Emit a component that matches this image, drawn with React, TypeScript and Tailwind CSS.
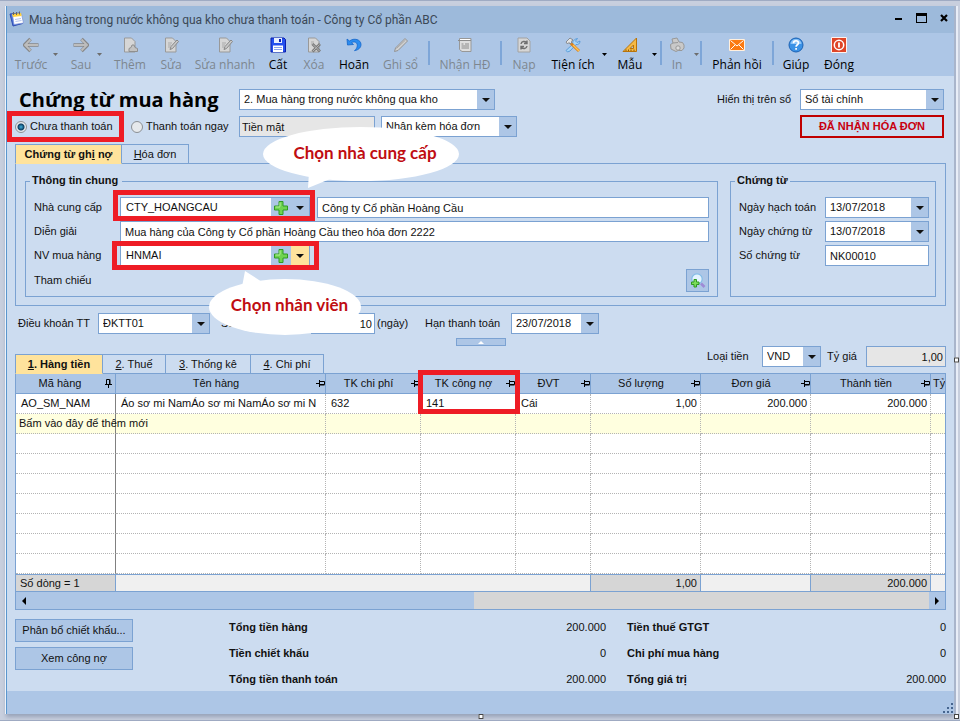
import React from 'react';
import clsx from 'clsx';

const Caret = ({ className }: { className?: string }) => (
  <svg viewBox="0 0 8 4" className={clsx('w-2 h-1 shrink-0', className)} fill="currentColor" aria-hidden="true">
    <path d="M0 0h8L4 4z" />
  </svg>
);

const PlusIcon = () => (
  <svg viewBox="0 0 16 16" className="w-4 h-4" aria-hidden="true">
    <path d="M6 1.500h4v4.500h4.500v4H10v4.500H6V10H1.500V6H6z" fill="#6fd350" stroke="#2f9a22" />
    <path d="M7 6.500V2.500M2.500 7H7" stroke="#b6f09c" fill="none" />
  </svg>
);

const PinIcon = ({ upright }: { upright?: boolean }) => (
  <svg viewBox="0 0 9 9" className={clsx('w-[9px] h-[9px] shrink-0', upright && '-rotate-90')} aria-hidden="true">
    <path d="M0 4.500h3M3.500 1v7M3.500 2.500h5v3h-5M3.500 6h5" fill="none" stroke="#000" />
  </svg>
);

const Svg = ({ children }: { children: React.ReactNode }) => (
  <svg viewBox="0 0 16 16" className="w-4 h-4" fill="none" aria-hidden="true">
    {children}
  </svg>
);

const page = <path d="M2.500 1h7L13 4.500V15H2.500z" fill="#d6d6d6" stroke="#999" />;

const icons = {
  back: <Svg><path d="M7.500 2L1.500 8l6 6M1 8h14.500" stroke="#868686" strokeWidth="3.600" /><path d="M7.500 2.500L2 8l5.500 5.500M2.500 8h12.500" stroke="#bdbdbd" strokeWidth="1.800" /></Svg>,
  forward: <Svg><path d="M8.500 2l6 6-6 6M15 8H.5" stroke="#868686" strokeWidth="3.600" /><path d="M8.500 2.500L14 8l-5.500 5.500M13.500 8H1" stroke="#bdbdbd" strokeWidth="1.800" /></Svg>,
  add: <Svg>{page}<path d="M7 14.500v-3l2-1 1-2.500h2l1 2.500 2.500 1v3z" fill="#c2c2c2" stroke="#8f8f8f" /></Svg>,
  edit: <Svg>{page}<path d="M5 6h4M5 8h3M5 10h2" stroke="#aaa" /><path d="M7 12.500l1-3L14 3l1.500 1.500L9.500 11.500z" fill="#c9c9c9" stroke="#888" /></Svg>,
  save: <Svg><path d="M1 1h13l1.500 1.500V15H1z" fill="#2450ee" stroke="#0a1fae" /><path d="M4 1h8v5H4z" fill="#e6eeff" /><path d="M9 2h2v3H9z" fill="#0a1fae" /><path d="M3 8.500h10V15H3z" fill="#fff" /><path d="M4 10.500h8M4 12.500h8" stroke="#8ba4ee" /></Svg>,
  remove: <Svg>{page}<path d="M5 5h3M5 7h3" stroke="#aaa" /><path d="M6.500 7l7.500 7.500M14 7l-7.500 7.500" stroke="#7d7d7d" strokeWidth="2.800" /><path d="M7 7.500l6.500 6.500M13.500 7.500L7 14" stroke="#b5b5b5" /></Svg>,
  undo: <Svg><path d="M1 2l.5 6 6-.5-2-1.800c3-2 6 0 5.800 3-.1 2-1.200 3.500-2.800 5 4-.8 6.500-3 6.500-6.200C15 2.500 8 .5 3.500 4z" fill="#2b8cf0" stroke="#1465c8" strokeWidth=".8" /></Svg>,
  pen: <Svg><path d="M1.500 14.500l1-3.500L12 1.500l2.500 2.500L5 13.500z" fill="#d2d2d2" stroke="#929292" /><path d="M3.500 11.500L12.500 3" stroke="#a5a5a5" /></Svg>,
  invoice: <Svg><path d="M2.500 1.500h11.500v13H5l-2.500-2z" fill="#dedede" stroke="#989898" /><path d="M1 3.500h13M4.500 7h2M8 7h4M4.500 9h7.500M4.500 11h7.500" stroke="#8c8c8c" /><path d="M3 2.500h10" stroke="#fff" /></Svg>,
  reload: <Svg><path d="M2 1h9l3 3v11H2z" fill="#d6d6d6" stroke="#a2a2a2" /><path d="M5 7c.5-3 4-3 5.500-1.500M11 3.500v3H8M11 9c-.5 3-4 3-5.500 1.500M5 12.500v-3h3" stroke="#6f6f6f" strokeWidth="1.400" /></Svg>,
  tools: <Svg><path d="M12.500 1.500l-2 2.500 1.500 1.500 3-1.500c0 3-2 4-4 3.500L5 14l-2.500 1L1 13.500 8 7c-1-2 1-5 4.500-5.500z" fill="#a5d4f8" stroke="#4a92d4" strokeWidth=".8" /><path d="M6 6.500l8 7.500" stroke="#d8801c" strokeWidth="3" /><path d="M8 8l6 6" stroke="#ffc452" strokeWidth="1.400" /><path d="M1 5l4-4 3 2-1.500 1L7 5 5 7 4 5.500 2.500 7z" fill="#e3e3e3" stroke="#777" strokeWidth=".8" /></Svg>,
  ruler: <Svg><path d="M1 14.500L14.500 1v13.500z" fill="#f5b945" stroke="#b97309" /><path d="M8 11.500h3.500V8z" fill="#adc6e6" stroke="#b97309" /><path d="M4 14v-1.500M6.500 14v-1.500M9 14v-1.500M12 14v-1.500" stroke="#8d5906" /></Svg>,
  print: <Svg><path d="M1.500 7.500L4 6 3 2l5-1 2 4 3.500.5L15 8v3l-2 2.500H9l-2 1-5-2.500z" fill="#c9c9c9" stroke="#989898" /><path d="M4 6l5-.5" stroke="#989898" /><circle cx="9" cy="11" r="2.200" fill="#dcdcdc" stroke="#989898" /></Svg>,
  mail: <Svg><path d="M.5 2.500h15v11H.5z" fill="#fb7a12" stroke="#fff0df" /><path d="M1.500 3.500L8 9l6.500-5.500M1.500 12.500L6 8M14.500 12.500L10 8" stroke="#fff" /></Svg>,
  help: <Svg><circle cx="8" cy="8" r="7" fill="#3b92e6" stroke="#1c62b4" /><path d="M2.500 7a5.500 5 0 0 1 11 0z" fill="#8cc4f8" /><path d="M5.500 6.200C5.600 3 10.500 3 10.500 6c0 1.800-2.400 1.800-2.400 3.700M8.100 11v1.800" stroke="#fff" strokeWidth="1.700" /></Svg>,
  close: <Svg><path d="M.5 .5h15v15H.5z" fill="#df4527" stroke="#fff2ee" /><circle cx="8" cy="8" r="4.700" stroke="#fff" strokeWidth="1.500" /><path d="M8 5.500v5" stroke="#fff" strokeWidth="1.800" /></Svg>,
};

type Tool = { icon?: keyof typeof icons; label?: string; w?: string; kind?: 'sep' | 'caret'; off?: boolean };

const tools: Tool[] = [
  { icon: 'back', label: 'Trước', w: 'w-10', off: true },
  { kind: 'caret', w: 'w-4', off: true },
  { icon: 'forward', label: 'Sau', w: 'w-7', off: true },
  { kind: 'caret', w: 'w-[10px]', off: true },
  { icon: 'add', label: 'Thêm', w: 'w-[50px]', off: true },
  { icon: 'edit', label: 'Sửa', w: 'w-8', off: true },
  { icon: 'edit', label: 'Sửa nhanh', w: 'w-[76px]', off: true },
  { icon: 'save', label: 'Cất', w: 'w-[30px]' },
  { icon: 'remove', label: 'Xóa', w: 'w-[42px]', off: true },
  { icon: 'undo', label: 'Hoãn', w: 'w-[38px]' },
  { icon: 'pen', label: 'Ghi sổ', w: 'w-[55px]', off: true },
  { kind: 'sep' },
  { icon: 'invoice', label: 'Nhận HĐ', w: 'w-[70px]', off: true },
  { kind: 'sep' },
  { icon: 'reload', label: 'Nạp', w: 'w-11', off: true },
  { icon: 'tools', label: 'Tiện ích', w: 'w-[54px]' },
  { kind: 'caret', w: 'w-[10px]' },
  { icon: 'ruler', label: 'Mẫu', w: 'w-10' },
  { kind: 'caret', w: 'w-[10px]' },
  { kind: 'sep' },
  { icon: 'print', label: 'In', w: 'w-[30px]', off: true },
  { kind: 'caret', w: 'w-2', off: true },
  { kind: 'sep' },
  { icon: 'mail', label: 'Phản hồi', w: 'w-[70px]' },
  { kind: 'sep' },
  { icon: 'help', label: 'Giúp', w: 'w-11' },
  { icon: 'close', label: 'Đóng', w: 'w-[42px]' },
];

function Toolbar() {
  return (
    <div className="flex h-[43px] pl-1 bg-[#adc6e6] font-['Open_Sans','Noto_Sans',sans-serif] text-xs">
      {tools.map((t, i) => {
        if (t.kind === 'sep') return <span key={i} className="w-0.5 h-6 mt-2 shrink-0 bg-[#7ea6d8]" />;
        if (t.kind === 'caret')
          return (
            <button key={i} type="button" aria-label="Thêm lựa chọn" disabled={t.off} className={clsx('flex pt-5 shrink-0', t.w, t.off ? 'text-[#6d6d6d]' : 'text-black')}>
              <svg viewBox="0 0 5 3" className="w-[5px] h-[3px] ml-0.5" fill="currentColor"><path d="M0 0h5L2.500 3z" /></svg>
            </button>
          );
        return (
          <button key={i} type="button" disabled={t.off} className={clsx('flex flex-col items-center gap-1 pt-1 shrink-0 whitespace-nowrap', t.w, t.off ? 'text-[#7d868f]' : 'text-black')}>
            {t.icon && icons[t.icon]}
            <span className="leading-4">{t.label}</span>
          </button>
        );
      })}
    </div>
  );
}

function Select({ label, value, className }: { label: string; value: string; className?: string }) {
  return (
    <span className={clsx('relative flex h-[21px] shrink-0 border border-[#7ba2d2] bg-white', className)}>
      <select aria-label={label} defaultValue={value} className="flex-1 min-w-0 appearance-none pl-1 pr-5 outline-none">
        <option>{value}</option>
      </select>
      <span className="pointer-events-none absolute inset-y-0 right-0 w-[17px] flex items-center justify-center bg-[#adc6e6]">
        <Caret />
      </span>
    </span>
  );
}

function Combo({ id, value, hot, children }: { id: string; value: string; hot?: boolean; children?: React.ReactNode }) {
  return (
    <div className="relative flex h-[21px] w-[190px] shrink-0 border border-[#7ba2d2] bg-white">
      <input id={id} defaultValue={value} className="flex-1 min-w-0 px-[5px] outline-none" />
      <button type="button" aria-label="Thêm" className="w-5 flex items-center justify-center bg-[#adc6e6]"><PlusIcon /></button>
      <button type="button" aria-label="Chọn" className={clsx('w-[18px] flex items-center justify-center', hot ? 'bg-[#ffe39c]' : 'bg-[#adc6e6]')}><Caret /></button>
      {children}
    </div>
  );
}

const RedBox = ({ className }: { className: string }) => (
  <span className={clsx('pointer-events-none absolute z-10 border-[5px] border-[#ee1c25]', className)} />
);

const field = 'h-[21px] min-w-0 border border-[#7ba2d2] bg-white px-1 outline-none';

function Tab({ active, className, children }: { active?: boolean; className?: string; children: React.ReactNode }) {
  return (
    <button type="button" className={clsx('h-5 -ml-px first:ml-0 border border-[#7ba2d2] text-center whitespace-nowrap', active ? 'relative bg-[#ffe39c] border-b-[#ffe39c] font-bold' : 'bg-[#ccdcf0]', className)}>
      {children}
    </button>
  );
}

const columns = [
  { name: 'Mã hàng', w: 'w-[100px]', value: 'AO_SM_NAM', foot: 'Số dòng = 1' },
  { name: 'Tên hàng', w: '', value: 'Áo sơ mi NamÁo sơ mi NamÁo sơ mi N' },
  { name: 'TK chi phí', w: 'w-[95px]', value: '632' },
  { name: 'TK công nợ', w: 'w-[95px]', value: '141', marked: true },
  { name: 'ĐVT', w: 'w-[75px]', value: 'Cái' },
  { name: 'Số lượng', w: 'w-[110px]', value: '1,00', foot: '1,00', num: true },
  { name: 'Đơn giá', w: 'w-[110px]', value: '200.000', num: true },
  { name: 'Thành tiền', w: 'w-[120px]', value: '200.000', foot: '200.000', num: true },
  { name: 'Tỷ', w: 'w-[14px]', value: '' },
];

function ItemsTable() {
  const last = columns.length - 1;
  const cell = (i: number) =>
    clsx('border-b border-dotted border-[#b4b4b4] whitespace-nowrap', i === 0 && 'border-r border-r-[#808080] [border-right-style:solid]', i > 0 && i < last && 'border-r');
  return (
    <div className="border border-[#7ba2d2] bg-white">
      <table className="w-full table-fixed border-separate border-spacing-0">
        <colgroup>
          {columns.map((c) => <col key={c.name} className={c.w} />)}
        </colgroup>
        <thead>
          <tr>
            {columns.map((c, i) => (
              <th key={c.name} className={clsx('relative h-5 p-0 font-normal bg-[#adc6e6] border-b border-[#7ba2d2]', i < last && 'border-r')}>
                <span className="flex items-center overflow-hidden whitespace-nowrap">
                  <span className={clsx('flex-1', i === last && 'pl-0.5')}>{c.name}</span>
                  {i < last && <span className={clsx(i === 0 && 'pr-0.5')}><PinIcon upright={i === 0} /></span>}
                </span>
                {c.marked && <RedBox className="-top-1 -left-[3px] w-[102px] h-11" />}
              </th>
            ))}
          </tr>
        </thead>
        <tbody>
          <tr>
            {columns.map((c, i) => (
              <td key={c.name} className={clsx('h-5 py-0 px-[5px] overflow-hidden', cell(i), c.num && 'pr-[3px] text-right')}>{c.value}</td>
            ))}
          </tr>
          <tr className="bg-[#ffffdf]">
            {columns.map((c, i) => (
              <td key={c.name} className={clsx('h-5 py-0 px-[3px]', cell(i))}>{i === 0 && 'Bấm vào đây để thêm mới'}</td>
            ))}
          </tr>
          {Array.from({ length: 7 }, (_, r) => (
            <tr key={r}>
              {columns.map((c, i) => <td key={c.name} className={clsx('h-5 p-0', cell(i))} />)}
            </tr>
          ))}
        </tbody>
        <tfoot>
          <tr>
            {columns.map((c, i) => (
              <td
                key={c.name}
                className={clsx(
                  'h-[18px] py-0 px-1 border-y border-[#7ba2d2] whitespace-nowrap leading-4',
                  c.foot ? 'bg-[#d6d6d6]' : 'bg-[#f0f0f0]',
                  (i === 0 || i > 3) && i < last && 'border-r',
                  c.num && 'pr-[3px] text-right',
                )}
              >
                {c.foot}
              </td>
            ))}
          </tr>
        </tfoot>
      </table>
      <div className="flex h-[17px] bg-[#adc6e6]">
        <button type="button" aria-label="Cuộn trái" className="w-4 flex items-center justify-center">
          <svg viewBox="0 0 4 8" className="w-1 h-2"><path d="M4 0v8L0 4z" /></svg>
        </button>
        <span className="flex-[441]" />
        <span className="flex-[455] bg-[#d6d6d6]" />
        <button type="button" aria-label="Cuộn phải" className="w-4 flex items-center justify-center">
          <svg viewBox="0 0 4 8" className="w-1 h-2"><path d="M0 0v8l4-4z" /></svg>
        </button>
      </div>
    </div>
  );
}

const totals = [
  ['Tổng tiền hàng', '200.000', 'Tiền thuế GTGT', '0'],
  ['Tiền chiết khấu', '0', 'Chi phí mua hàng', '0'],
  ['Tổng tiền thanh toán', '200.000', 'Tổng giá trị', '200.000'],
];

const radio =
  "appearance-none w-3 h-3 rounded-full border border-[#8a8f94] bg-[#e6e9ec] checked:bg-[radial-gradient(circle,#3fb0dc_0,#0c3f63_3px,#e6e9ec_4px)]";

export default function App() {
  return (
    <div className="min-h-screen px-1.5 pt-[5px] pb-1.5 bg-[#c8cfde] border-y border-[#9fabc3] font-['Liberation_Sans',Arial,sans-serif] text-[11px] leading-[15px] text-[#111]">
      <div className="relative bg-[#ccdcf0] border-l border-[#5b96cd] shadow-[-1px_0_0_#eef3fa,2px_0_0_#a9b5cb,4px_0_0_#e8edf7,0_3px_4px_#98a3b9]">
        <header className="flex items-center h-[27px] pl-0.5 pr-1.5 bg-[#9dbadb]">
          <svg viewBox="0 0 16 16" className="w-4 h-4 mb-0.5" fill="none" aria-hidden="true">
            <path d="M1 3l10-1 2.500 10.500L4 15z" fill="#4a74dc" stroke="#2e4cb0" />
            <path d="M3.500 4l9-1 2 9-9.500 1.500z" fill="#fff" stroke="#7b91d8" strokeWidth=".7" />
            <path d="M3 3l9-1 .7 3L4 6z" fill="#ffd23e" />
            <path d="M4.500 1v3M7.500 1v3M10.500 .5v3" stroke="#666" />
            <path d="M6 8.500l6-1M6.500 10.500l6-1" stroke="#b4c4ee" />
          </svg>
          <h1 className="flex-1 ml-1 font-['Roboto','Noto_Sans',sans-serif] text-xs text-[#3b4856] whitespace-nowrap">
            Mua hàng trong nước không qua kho chưa thanh toán - Công ty Cổ phần ABC
          </h1>
          <div className="flex items-center gap-[13px] pb-1">
            <button type="button" aria-label="Thu nhỏ"><svg viewBox="0 0 8 10" className="w-2 h-2.5"><path d="M0 5h7v2H0z" /></svg></button>
            <button type="button" aria-label="Phóng to"><svg viewBox="0 0 11 10" className="w-[11px] h-2.5"><path d="M0 0h11v10H0zM1 3v6h9V3z" fillRule="evenodd" /></svg></button>
            <button type="button" aria-label="Đóng cửa sổ"><svg viewBox="0 0 8 8" className="w-2 h-2"><path d="M1 1l6 6M7 1L1 7" stroke="#000" strokeWidth="2.200" /></svg></button>
          </div>
        </header>

        <Toolbar />

        <main className="px-2 pt-[13px]">
          {/* Voucher type */}
          <div className="flex items-center h-[21px]">
            <h2 className="w-56 pl-1 font-['Open_Sans','Noto_Sans',sans-serif] text-xl font-bold text-black whitespace-nowrap">Chứng từ mua hàng</h2>
            <Select label="Loại chứng từ" value="2. Mua hàng trong nước không qua kho" className="w-64" />
            <span className="flex-1 text-right pr-[9px]">Hiển thị trên sổ</span>
            <Select label="Hiển thị trên sổ" value="Sổ tài chính" className="w-36 mr-0.5" />
          </div>

          <div className="flex items-center h-[21px] mt-1.5">
            <div className="w-56 flex items-center">
              <label className="relative flex items-center gap-[3px] w-[116px]">
                <input type="radio" name="paid" defaultChecked className={radio} />
                Chưa thanh toán
                <RedBox className="-left-2 -top-2 -bottom-2 w-[117px]" />
              </label>
              <label className="flex items-center gap-[3px] whitespace-nowrap">
                <input type="radio" name="paid" className={radio} />
                Thanh toán ngay
              </label>
            </div>
            <input aria-label="Hình thức thanh toán" defaultValue="Tiền mặt" readOnly className="h-[21px] w-[136px] border border-[#7ba2d2] bg-[#e6e6e6] px-0.5 outline-none" />
            <Select label="Hóa đơn" value="Nhận kèm hóa đơn" className="w-[136px] ml-1.5" />
            <strong className="ml-auto mr-0.5 w-36 h-[23px] leading-[19px] border-2 border-[#c00000] text-center text-[#c8000f]">ĐÃ NHẬN HÓA ĐƠN</strong>
          </div>

          <div className="flex mt-[7px] -mb-px">
            <Tab active className="w-[107px]">Chứng từ gh<u>i</u> nợ</Tab>
            <Tab className="w-[68px]"><u>H</u>óa đơn</Tab>
          </div>

          <section className="flex gap-3 border border-[#7ba2d2] px-[9px] pt-[9px] pb-2">
            <fieldset className="flex-1 min-w-0 border border-[#7ba2d2] pl-2 pr-2 pb-1">
              <legend className="-ml-1 pl-0.5 pr-1 h-4 font-bold">Thông tin chung</legend>
              <div className="flex flex-col gap-[3px] pt-2">
                <div className="flex items-center">
                  <label htmlFor="supplier" className="w-[86px] shrink-0">Nhà cung cấp</label>
                  <Combo id="supplier" value="CTY_HOANGCAU">
                    <RedBox className="-top-2 -bottom-1 -left-2 -right-1.5" />
                    <div className="absolute z-20 left-[141px] -top-[71px] w-[198px] h-[61px]">
                      <svg viewBox="0 0 198 61" className="absolute inset-0" fill="#fff" aria-hidden="true">
                        <ellipse cx="99" cy="27" rx="98" ry="27" />
                        <path d="M47 45L46 61l32-13z" />
                      </svg>
                      <p className="relative pt-4 pl-2 text-center font-['Lato',sans-serif] text-[17px] leading-5 font-bold text-[#c00d12]">Chọn nhà cung cấp</p>
                    </div>
                  </Combo>
                  <input aria-label="Tên nhà cung cấp" defaultValue="Công ty Cổ phần Hoàng Cầu" className={clsx(field, 'flex-1 ml-[7px]')} />
                </div>
                <div className="flex items-center">
                  <label htmlFor="note" className="w-[86px] shrink-0">Diễn giải</label>
                  <input id="note" defaultValue="Mua hàng của Công ty Cổ phần Hoàng Cầu theo hóa đơn 2222" className={clsx(field, 'flex-1')} />
                </div>
                <div className="flex items-center">
                  <label htmlFor="staff" className="w-[86px] shrink-0">NV mua hàng</label>
                  <Combo id="staff" value="HNMAI" hot>
                    <RedBox className="-top-[5px] -bottom-[5px] -left-[9px] -right-2.5" />
                    <div className="absolute z-20 left-[88px] top-[25px] w-[153px] h-[64px]">
                      <svg viewBox="0 0 153 64" className="absolute inset-0" fill="#fff" aria-hidden="true">
                        <ellipse cx="76" cy="36" rx="76" ry="28" />
                        <path d="M33 16L36 0l17 11z" />
                      </svg>
                      <p className="relative pt-6 pl-2 text-center font-['Lato',sans-serif] text-[17px] leading-5 font-bold text-[#c00d12]">Chọn nhân viên</p>
                    </div>
                  </Combo>
                </div>
                <div className="flex items-center justify-between h-[23px]">
                  <span>Tham chiếu</span>
                  <button type="button" aria-label="Tìm tham chiếu" className="w-[23px] h-[23px] flex items-center justify-center border border-[#7ba2d2] bg-[#adc6e6]">
                    <svg viewBox="0 0 16 16" className="w-4 h-4" fill="none" aria-hidden="true">
                      <circle cx="7" cy="6" r="5.200" fill="#e4f4ff" stroke="#83bce6" strokeWidth="1.200" />
                      <path d="M11 10.500l3.500 3.500" stroke="#9d8bd6" strokeWidth="2.600" />
                      <path d="M4 6.500h2.500V9H9v2.500H6.500V14H4v-2.500H1.500V9H4z" fill="#7ddc5c" stroke="#2f9a22" />
                    </svg>
                  </button>
                </div>
              </div>
            </fieldset>

            <fieldset className="w-[206px] min-w-0 border border-[#7ba2d2] pl-2 pr-1.5">
              <legend className="-ml-1 px-0.5 h-4 font-bold">Chứng từ</legend>
              <div className="flex flex-col gap-[3px] pt-2">
                <label className="flex items-center justify-between">Ngày hạch toán<Select label="Ngày hạch toán" value="13/07/2018" className="w-[104px]" /></label>
                <label className="flex items-center justify-between">Ngày chứng từ<Select label="Ngày chứng từ" value="13/07/2018" className="w-[104px]" /></label>
                <label className="flex items-center justify-between">Số chứng từ<input defaultValue="NK00010" className={clsx(field, 'w-[104px]')} /></label>
              </div>
            </fieldset>
          </section>

          {/* Payment terms */}
          <div className="flex items-center h-[21px] mt-[7px] pl-[3px]">
            <span className="w-20">Điều khoản TT</span>
            <Select label="Điều khoản TT" value="ĐKTT01" className="w-28" />
            <label htmlFor="days" className="w-[90px] ml-[11px]">Số ngày nợ</label>
            <input id="days" defaultValue="10" className="h-[21px] w-16 border border-[#7ba2d2] bg-white px-0.5 text-right outline-none" />
            <span className="w-[50px] pl-0.5">(ngày)</span>
            <span className="w-[86px]">Hạn thanh toán</span>
            <Select label="Hạn thanh toán" value="23/07/2018" className="w-[88px]" />
          </div>
          <button type="button" aria-label="Thu gọn" className="flex items-center justify-center mx-auto mt-1 w-[50px] h-2 border border-[#7ba2d2] bg-[#adc6e6]">
            <svg viewBox="0 0 6 3" className="w-1.5 h-[3px]" fill="#fff"><path d="M3 0l3 3H0z" /></svg>
          </button>

          <div className="flex justify-between h-7 -mb-px">
            <div className="flex self-end">
              <Tab active className="w-[88px]"><u>1</u>. Hàng tiền</Tab>
              <Tab className="w-16"><u>2</u>. Thuế</Tab>
              <Tab className="w-[86px]"><u>3</u>. Thống kê</Tab>
              <Tab className="w-[74px]"><u>4</u>. Chi phí</Tab>
            </div>
            <div className="flex items-center h-[21px]">
              <span className="w-[55px]">Loại tiền</span>
              <Select label="Loại tiền" value="VND" className="w-[59px]" />
              <label htmlFor="rate" className="w-[39px] ml-1.5">Tỷ giá</label>
              <input id="rate" defaultValue="1,00" readOnly className="h-[21px] w-20 border border-[#7ba2d2] bg-[#e6e6e6] px-0.5 text-right outline-none" />
            </div>
          </div>

          <ItemsTable />

          <div className="flex h-[81px] pt-1">
            <div className="flex flex-col gap-[5px] w-[214px] pt-[5px]">
              <button type="button" className="w-[118px] h-[23px] border border-[#7ba2d2] bg-[#adc6e6]">Phân bổ chiết khấu...</button>
              <button type="button" className="w-[118px] h-[23px] border border-[#7ba2d2] bg-[#adc6e6]">Xem công nợ</button>
            </div>
            <dl className="flex-1">
              {totals.map(([a, av, b, bv]) => (
                <div key={a} className="flex items-center h-[26px]">
                  <dt className="flex-[277] font-bold">{a}</dt>
                  <dd className="w-[100px] text-right">{av}</dd>
                  <dt className="flex-[259] ml-[21px] font-bold">{b}</dt>
                  <dd className="w-[60px] text-right">{bv}</dd>
                </div>
              ))}
            </dl>
          </div>
        </main>

        <footer className="flex items-end justify-end h-[23px] bg-[#adc6e6]">
          <svg viewBox="0 0 12 12" className="w-3 h-3" fill="#46658f" aria-hidden="true">
            <path d="M9 1h2v2H9zM5 5h2v2H5zM9 5h2v2H9zM1 9h2v2H1zM5 9h2v2H5zM9 9h2v2H9z" />
          </svg>
        </footer>

        {/* Resize handles */}
        <span className="absolute -bottom-[5px] left-1/2 -translate-x-1/2 w-[5px] h-[5px] border border-[#444] bg-white" />
        <span className="absolute -right-[5px] top-1/2 -translate-y-1/2 w-[5px] h-[5px] border border-[#444] bg-white" />
        <span className="absolute -right-[5px] -bottom-[5px] w-[5px] h-[5px] border border-[#444] bg-white" />
      </div>
    </div>
  );
}
